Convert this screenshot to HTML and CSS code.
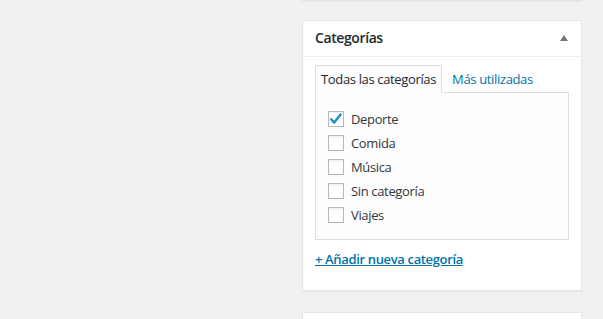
FILE: index.html
```html
<!DOCTYPE html>
<html lang="es">
<head>
<meta charset="utf-8">
<title>Categorías</title>
<link rel="stylesheet" href="styles.css">
</head>
<body>
<div class="layout">
  <div class="main"></div>
  <aside class="sidebar">
    <div class="postbox postbox-prev"></div>
    <div class="postbox">
      <div class="postbox-header">
        <h2 class="postbox-title">Categorías</h2>
        <span class="toggle-arrow"></span>
      </div>
      <div class="postbox-inside">
        <ul class="tabs">
          <li class="tab tab-active">Todas las categorías</li>
          <li class="tab"><a href="#" class="tab-link">Más utilizadas</a></li>
        </ul>
        <div class="tab-panel">
          <ul class="checklist">
            <li class="check-item"><span class="checkbox checked"><svg viewBox="0 0 16 16" width="16" height="16"><path d="M3.2 8.3 L6.2 11.6 L12.6 3.6" fill="none" stroke="#1e8cbe" stroke-width="2.4" stroke-linecap="round" stroke-linejoin="round"/></svg></span><span class="label">Deporte</span></li>
            <li class="check-item"><span class="checkbox"></span><span class="label">Comida</span></li>
            <li class="check-item"><span class="checkbox"></span><span class="label">Música</span></li>
            <li class="check-item"><span class="checkbox"></span><span class="label">Sin categoría</span></li>
            <li class="check-item"><span class="checkbox"></span><span class="label">Viajes</span></li>
          </ul>
        </div>
        <a href="#" class="add-link">+ Añadir nueva categoría</a>
      </div>
    </div>
    <div class="postbox postbox-next"></div>
  </aside>
</div>
</body>
</html>
```
FILE: styles.css
```css
html, body {
  margin: 0;
  padding: 0;
  background: #f1f1f1;
  font-family: "Open Sans", "Noto Sans", sans-serif;
  font-size: 13px;
  letter-spacing: -0.35px;
  color: #23282d;
  overflow: hidden;
}
.layout {
  display: flex;
  height: 319px;
}
.main {
  flex: 1;
}
.sidebar {
  width: 280px;
  flex: none;
  margin-right: 21px;
  margin-top: -40px;
  display: flex;
  flex-direction: column;
  gap: 19px;
}
.postbox {
  background: #fff;
  border: 1px solid #e5e5e5;
  box-shadow: 0 1px 1px rgba(0, 0, 0, 0.04);
  box-sizing: border-box;
  flex: none;
}
.postbox-prev {
  height: 41px;
}
.postbox-next {
  height: 60px;
  margin-top: 2px;
}
.postbox-header {
  display: flex;
  align-items: center;
  justify-content: space-between;
  height: 36px;
  box-sizing: border-box;
  border-bottom: 1px solid #eee;
  padding: 0 13px 1px 12px;
}
.postbox-title {
  margin: 0;
  font-size: 14px;
  font-weight: 600;
  letter-spacing: -0.4px;
  color: #23282d;
  line-height: 1;
}
.toggle-arrow {
  width: 0;
  height: 0;
  border-left: 4px solid transparent;
  border-right: 4px solid transparent;
  border-bottom: 6px solid #72777c;
}
.postbox-inside {
  padding: 8px 12px 0 12px;
  height: 233px;
  box-sizing: border-box;
}
.tabs {
  list-style: none;
  margin: 0;
  padding: 0;
  display: flex;
  height: 27px;
}
.tab {
  padding: 0 5px;
  line-height: 26px;
  border: 1px solid transparent;
  border-bottom: none;
  white-space: nowrap;
}
.tab-active {
  border-color: #ddd;
  background: #fdfdfd;
  position: relative;
  z-index: 1;
  box-sizing: border-box;
  margin-bottom: -1px;
  height: 28px;
}
.tab-link {
  color: #0073aa;
  text-decoration: none;
  padding-left: 4px;
}
.tab-panel {
  border: 1px solid #ddd;
  background: #fdfdfd;
  height: 148px;
  box-sizing: border-box;
  padding: 18px 0 0 12px;
}
.checklist {
  list-style: none;
  margin: 0;
  padding: 0;
  display: flex;
  flex-direction: column;
  gap: 8px;
}
.check-item {
  display: flex;
  align-items: center;
  height: 16px;
  line-height: 16px;
}
.checkbox {
  width: 16px;
  height: 16px;
  box-sizing: border-box;
  border: 1px solid #b4b9be;
  background: #fff;
  box-shadow: inset 0 1px 2px rgba(0, 0, 0, 0.07);
  margin-right: 7px;
  display: flex;
  align-items: center;
  justify-content: center;
}
.checkbox svg {
  flex: none;
}
.label {
  color: #32373c;
}
.add-link {
  display: inline-block;
  margin-top: 10px;
  line-height: 18px;
  color: #0073aa;
  text-decoration: underline;
  font-weight: 600;
}
```
